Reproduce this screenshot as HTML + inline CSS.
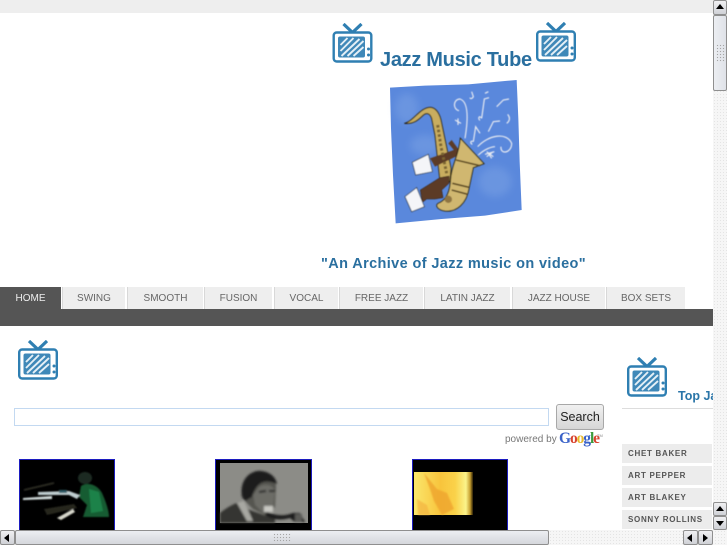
<!DOCTYPE html>
<html><head><meta charset="utf-8"><style>
html,body{margin:0;padding:0;width:727px;height:545px;overflow:hidden;background:#fff;font-family:"Liberation Sans",sans-serif}
.a{position:absolute}
.tab{position:absolute;top:287px;height:22px;background:#eeeeee;border-left:1px solid #d8d8d8;box-sizing:border-box;color:#666;font-size:10px;line-height:23px;text-align:center;white-space:nowrap}
.li{position:absolute;left:622px;width:90px;height:19px;background:#ececec;color:#555;font-size:8px;font-weight:bold;letter-spacing:.7px;line-height:19px;text-indent:6px;white-space:nowrap;overflow:hidden}
.btn{position:absolute;background:linear-gradient(#f0f0f2,#cfd1d6);border:1px solid #8f8f8f;border-radius:2px;box-sizing:border-box}
.track{background-color:#f6f6f6;background-image:radial-gradient(#e4e4e4 .6px,transparent .7px);background-size:3px 3px}
</style></head><body>
<svg width="0" height="0" style="position:absolute"><defs>
<g id="tv">
<path d="M11 1L20 9.5L29 1" fill="none" stroke="#2f7fb2" stroke-width="3.2"/>
<rect x="1.2" y="9.5" width="37.6" height="29" rx="3" fill="#fff" stroke="#2f7fb2" stroke-width="2.4"/>
<rect x="5.5" y="13.5" width="27" height="21" rx="2" fill="#3f88b8"/>
<path d="M8 22L15 15M8 28L21 15M9 33L27 16M15 33L31 18M21 33L31 24" stroke="#e4eff6" stroke-width="1.9" fill="none"/>
<circle cx="36" cy="26" r="1.5" fill="#2f7fb2"/><circle cx="36" cy="32" r="1.5" fill="#2f7fb2"/>
</g>
</defs></svg>

<div class="a" style="left:0;top:0;width:713px;height:13px;background:#eeeeee"></div>

<svg class="a" style="left:332px;top:23px" width="41" height="40" viewBox="0 0 40 40"><use href="#tv"/></svg>
<svg class="a" style="left:535px;top:22px" width="42" height="40" viewBox="0 0 40 40"><use href="#tv"/></svg>
<svg class="a" style="left:17px;top:340px" width="42" height="40" viewBox="0 0 40 40"><use href="#tv"/></svg>
<svg class="a" style="left:626px;top:357px" width="42" height="40" viewBox="0 0 40 40"><use href="#tv"/></svg>

<div class="a" style="left:380px;top:47px;font-size:20px;font-weight:bold;color:#2a6f9f;letter-spacing:-.3px;white-space:nowrap;line-height:26px">Jazz Music Tube</div>

<svg class="a" style="left:385px;top:75px" width="145" height="155" viewBox="0 0 435 465">
<defs><filter id="b" x="-20%" y="-20%" width="140%" height="140%"><feGaussianBlur stdDeviation="12"/></filter><filter id="w"><feGaussianBlur stdDeviation="1.5"/></filter></defs>
<path d="M15 38L120 32L250 28L395 15L400 130L404 260L410 405L300 422L170 432L32 445L24 300L18 160Z" fill="#5a88dc"/>
<g filter="url(#b)" fill="#8aaee8" opacity=".35"><ellipse cx="65" cy="100" rx="35" ry="45"/><ellipse cx="120" cy="210" rx="45" ry="30"/><ellipse cx="330" cy="320" rx="50" ry="45"/></g>
<g filter="url(#w)">
<path d="M58 145C85 140 105 98 135 97C152 97 165 115 170 145L198 280L195 320L165 318L150 180L140 130C135 115 125 112 115 120C100 135 85 148 58 145Z" fill="#c9ad5f" stroke="#2a2418" stroke-width="3"/>
<path d="M135 250L215 222L222 240L150 275Z" fill="#5b3a26"/>
<path d="M190 205L215 235L220 222L200 195Z" fill="#5b3a26"/>
<path d="M82 262L130 238L142 290L92 300Z" fill="#f4f5f8" stroke="#222" stroke-width="2"/>
<path d="M226 190L297 266L265 278L252 340C245 385 215 412 180 408C160 405 148 392 160 385C185 375 195 350 197 310C200 270 222 240 226 190Z" fill="#d0b76f" stroke="#26200f" stroke-width="3"/>
<path d="M213 255L285 272M202 325L252 337M200 345L248 358" stroke="#5d4a20" stroke-width="5" fill="none"/>
<circle cx="190" cy="373" r="11" fill="#8f7442"/>
<path d="M158 150L168 215L185 295" stroke="#7a6430" stroke-width="9" stroke-dasharray="8 6" fill="none"/>
<path d="M106 345L165 308L192 303L192 325L170 345L174 368L150 372L125 372L112 382Z" fill="#5b3a26" stroke="#2a1a10" stroke-width="1.5"/>
<path d="M60 365L95 338L118 395L80 410Z" fill="#f4f5f8" stroke="#222" stroke-width="2"/>
<g fill="none" stroke="#e8ebf2" stroke-width="3.5">
<path d="M240 190C250 130 250 80 225 72C205 72 202 102 222 107"/>
<path d="M278 215C310 180 365 170 380 205C380 235 345 240 348 215"/>
<path d="M290 130L298 72L312 68M290 130C282 118 278 132 285 136"/>
<path d="M265 200L272 155L285 175M265 200C256 195 255 205 262 208"/>
<path d="M310 170L325 140L345 138M335 95L355 75L372 72M368 118C378 130 372 140 365 145M260 50L265 65C262 72 255 72 255 68"/>
<path d="M280 240C300 222 320 215 330 215M300 238L328 230M310 235L320 250"/>
<path d="M210 135L228 145M219 130L219 150M300 55L310 50M305 230L325 245M325 230L305 245"/>
</g>
</g>
</svg>

<div class="a" style="left:321px;top:252px;font-size:14.5px;font-weight:bold;color:#2a6f9f;letter-spacing:.38px;white-space:nowrap;line-height:20px;padding-top:2px">"An Archive of Jazz music on video"</div>

<div class="a" style="left:0;top:309px;width:713px;height:17px;background:#555555"></div>
<div class="a" style="left:0;top:287px;width:61px;height:22px;background:#555;color:#eee;font-size:10px;line-height:23px;text-align:center">HOME</div>
<div class="tab" style="left:62px;width:63px">SWING</div>
<div class="tab" style="left:127px;width:76px">SMOOTH</div>
<div class="tab" style="left:204px;width:68px">FUSION</div>
<div class="tab" style="left:274px;width:64px">VOCAL</div>
<div class="tab" style="left:339px;width:84px">FREE JAZZ</div>
<div class="tab" style="left:424px;width:86px">LATIN JAZZ</div>
<div class="tab" style="left:512px;width:93px">JAZZ HOUSE</div>
<div class="tab" style="left:606px;width:79px">BOX SETS</div>

<div class="a" style="left:14px;top:408px;width:535px;height:18px;box-sizing:border-box;border:1px solid #c3d9f1;background:#fff"></div>
<div class="a" style="left:556px;top:404px;width:48px;height:26px;box-sizing:border-box;border:1px solid #a8a8a8;border-radius:3px;background:linear-gradient(#f1f1f1,#d6d6d6);color:#222;font-size:12.5px;line-height:24px;text-align:center">Search</div>
<div class="a" style="left:505px;top:434px;font-size:10px;color:#777;white-space:nowrap;line-height:12px">powered by</div>
<div class="a" style="left:559px;top:430px;font-family:'Liberation Serif',serif;font-size:15.5px;font-weight:bold;letter-spacing:-1.1px;white-space:nowrap;line-height:17px"><span style="color:#3a62c8">G</span><span style="color:#d8432f">o</span><span style="color:#e8b92c">o</span><span style="color:#3a62c8">g</span><span style="color:#3c9a3c">l</span><span style="color:#d8432f">e</span></div>
<div class="a" style="left:597px;top:433px;font-size:4px;color:#888;line-height:6px">TM</div>

<div class="a" style="left:678px;top:389px;width:35px;overflow:hidden;font-size:12.5px;font-weight:bold;color:#2a75a8;white-space:nowrap;line-height:15px">Top Jazz</div>
<div class="a" style="left:622px;top:408px;width:91px;height:1px;background:#dddddd"></div>
<div class="li" style="top:444px">CHET BAKER</div>
<div class="li" style="top:466px">ART PEPPER</div>
<div class="li" style="top:488px">ART BLAKEY</div>
<div class="li" style="top:510px">SONNY ROLLINS</div>

<!-- thumb 1 -->
<svg class="a" style="left:19px;top:459px" width="96" height="72" viewBox="0 0 96 72">
<defs><filter id="s"><feGaussianBlur stdDeviation=".8"/></filter></defs>
<rect width="96" height="72" fill="#000"/>
<g filter="url(#s)">
<ellipse cx="66" cy="19" rx="7" ry="6" fill="#1e2a24"/>
<path d="M62 27C68 23 78 25 83 34C87 43 90 52 90 58L64 58L68 46L60 38Z" fill="#155c33"/>
<path d="M70 30L80 33L84 52L72 54Z" fill="#1f8248"/>
<path d="M4 39L33 37L33 40L4 41Z" fill="#d4dede"/>
<path d="M19 33L50 32L61 36L58 40L50 36L19 36Z" fill="#c0ced0"/>
<path d="M38 59L54 50L56 53L42 61Z" fill="#d8d8cc"/>
<path d="M5 30L35 23L35 25L5 32Z" fill="#2a2a24"/>
<path d="M25 50L55 45L58 49L28 56Z" fill="#26261f"/>
<rect x="40" y="31" width="8" height="3" fill="#2f5c66"/>
</g>
<rect x=".5" y=".5" width="95" height="72" fill="none" stroke="#1c1cc0"/>
</svg>

<!-- thumb 2 -->
<svg class="a" style="left:215px;top:459px" width="97" height="72" viewBox="0 0 97 72">
<defs><filter id="s3"><feGaussianBlur stdDeviation="1.1"/></filter></defs>
<rect width="97" height="72" fill="#000"/>
<rect x="5" y="4" width="88" height="60" fill="#8c8c87"/>
<g filter="url(#s3)">
<path d="M5 64L5 54C10 50 16 46 22 44L32 50L60 60L60 64Z" fill="#353532"/>
<path d="M22 44L32 62L38 62L29 42Z" fill="#a8a8a2"/>
<path d="M27 34C27 20 36 13 46 13C56 14 61 20 61 28L60 48L50 56L38 50L30 42Z" fill="#55554f"/>
<path d="M27 38C24 20 36 11 46 12C56 13 61 19 62 25C50 20 42 22 37 38L30 42Z" fill="#1a1a1a"/>
<path d="M44 28C50 24 58 26 60 32L58 50L48 54L40 46L38 36Z" fill="#6c6c66"/>
<path d="M44 33L51 32M54 32L60 32" stroke="#222" stroke-width="2"/>
<rect x="49" y="47" width="9" height="6" fill="#c8c8c2"/>
<path d="M52 53C60 56 68 58 78 54L85 54L90 63L80 63L75 59C64 62 56 60 50 56Z" fill="#1c1c1a"/>
<rect x="80" y="55" width="7" height="8" fill="#5a5a56"/>
</g>
<rect x=".5" y=".5" width="96" height="72" fill="none" stroke="#1c1cc0"/>
</svg>

<!-- thumb 3 -->
<svg class="a" style="left:412px;top:459px" width="96" height="72" viewBox="0 0 96 72">
<defs><linearGradient id="y" x1="0" x2="1" y1="0" y2="0"><stop offset="0" stop-color="#fbe66c"/><stop offset=".45" stop-color="#f8c43c"/><stop offset=".7" stop-color="#fad24a"/><stop offset=".88" stop-color="#fbf38a"/><stop offset=".95" stop-color="#c8a030"/><stop offset="1" stop-color="#2a1e04"/></linearGradient></defs>
<rect width="96" height="72" fill="#000"/>
<rect x="2" y="13" width="59" height="43" fill="url(#y)"/>
<path d="M12 14L25 30L35 34L42 50L30 56L22 42L18 30Z" fill="#efa52e" opacity=".8" filter="url(#s)"/>
<path d="M5 40L15 46L18 56L6 56Z" fill="#f4b440" opacity=".7" filter="url(#s)"/>
<rect x=".5" y=".5" width="95" height="72" fill="none" stroke="#1c1cc0"/>
</svg>

<!-- vertical scrollbar -->
<div class="a track" style="left:713px;top:0;width:14px;height:530px"></div>
<div class="btn" style="left:713px;top:0;width:14px;height:15px"></div>
<div class="a" style="left:716px;top:4px;width:0;height:0;border-left:4px solid transparent;border-right:4px solid transparent;border-bottom:5px solid #000"></div>
<div class="a" style="left:713px;top:15px;width:14px;height:76px;box-sizing:border-box;border:1px solid #8f8f8f;border-radius:2px;background:linear-gradient(90deg,#eceef2,#dfe2e8)"></div>
<div class="a" style="left:716px;top:44px;width:9px;height:18px;background-image:radial-gradient(#a5a5a5 .7px,transparent .8px);background-size:3px 3px"></div>
<div class="btn" style="left:713px;top:502px;width:14px;height:14px"></div>
<div class="a" style="left:716px;top:506px;width:0;height:0;border-left:4px solid transparent;border-right:4px solid transparent;border-bottom:5px solid #000"></div>
<div class="btn" style="left:713px;top:516px;width:14px;height:14px"></div>
<div class="a" style="left:716px;top:521px;width:0;height:0;border-left:4px solid transparent;border-right:4px solid transparent;border-top:5px solid #000"></div>

<!-- horizontal scrollbar -->
<div class="a track" style="left:0;top:530px;width:727px;height:15px"></div>
<div class="btn" style="left:0;top:530px;width:15px;height:15px"></div>
<div class="a" style="left:4px;top:534px;width:0;height:0;border-top:4px solid transparent;border-bottom:4px solid transparent;border-right:5px solid #000"></div>
<div class="a" style="left:15px;top:530px;width:534px;height:15px;box-sizing:border-box;border:1px solid #8f8f8f;border-radius:2px;background:linear-gradient(#eceef2,#d5d7dc)"></div>
<div class="a" style="left:273px;top:533px;width:18px;height:9px;background-image:radial-gradient(#a5a5a5 .7px,transparent .8px);background-size:3px 3px"></div>
<div class="btn" style="left:683px;top:530px;width:15px;height:15px"></div>
<div class="a" style="left:687px;top:534px;width:0;height:0;border-top:4px solid transparent;border-bottom:4px solid transparent;border-right:5px solid #000"></div>
<div class="btn" style="left:698px;top:530px;width:15px;height:15px"></div>
<div class="a" style="left:703px;top:534px;width:0;height:0;border-top:4px solid transparent;border-bottom:4px solid transparent;border-left:5px solid #000"></div>
</body></html>
